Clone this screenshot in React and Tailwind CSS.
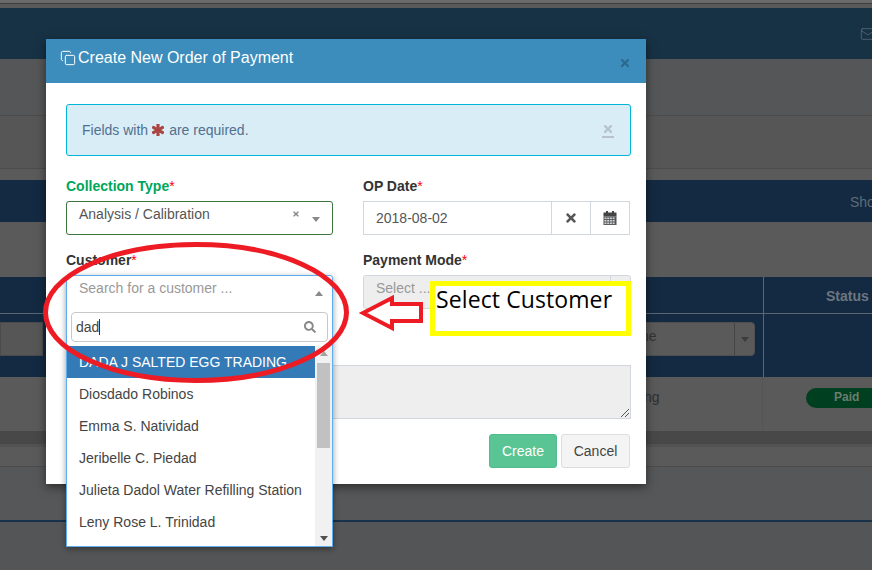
import React from "react";
import { Copy, Mail } from "lucide-react";
import { FaTimes, FaAsterisk, FaSearch } from "react-icons/fa";

const Req = () => <span className="text-[#ff0000] font-normal">*</span>;

const Calendar = () => (
  <svg width="14" height="14" viewBox="0 0 14 14">
    <rect x="0.5" y="1.5" width="13" height="4" fill="#444" />
    <rect x="3" y="0" width="2" height="3" fill="#444" />
    <rect x="9" y="0" width="2" height="3" fill="#444" />
    <rect x="0.5" y="5.5" width="13" height="8.5" fill="#555" />
    {[6.5, 9, 11.5].map((y) =>
      [1.5, 4.2, 6.9, 9.6].map((x) => <rect key={x + "-" + y} x={x} y={y} width="2" height="1.6" fill="#cfd2d6" />)
    )}
  </svg>
);

const Caret = ({ up, color = "#888", size = 4 }) => (
  <span
    className="block w-0 h-0 border-x-transparent border-solid"
    style={{
      borderLeftWidth: size,
      borderRightWidth: size,
      borderTopWidth: up ? 0 : size + 1,
      borderBottomWidth: up ? size + 1 : 0,
      borderTopColor: color,
      borderBottomColor: color,
    }}
  />
);

const customers = [
  "Diosdado Robinos",
  "Emma S. Natividad",
  "Jeribelle C. Piedad",
  "Julieta Dadol Water Refilling Station",
  "Leny Rose L. Trinidad",
];

export default function App() {
  return (
    <div className="relative w-[872px] h-[570px] overflow-hidden bg-[#545556] text-[14px] text-[#444] font-['Liberation_Sans',Arial,sans-serif]">
      {/* dimmed page */}
      <div className="h-[3px] bg-[#6a6a6a]" />
      <div className="h-[1px] bg-[#3e3e3e]" />
      <div className="h-[4px] bg-[#595959]" />
      <div className="h-[51px] bg-[#173245] flex justify-end">
        <Mail className="w-[16px] h-[16px] mt-[18px] -mr-[4px] text-[#5d6a74] shrink-0" strokeWidth={1.2} />
      </div>
      <div className="h-[57px] bg-[#555657] border-b border-[#4c4c4c]" />
      <div className="h-[53px] bg-[#565656] border-b border-[#4c4c4c]" />
      <div className="h-[11px] bg-[#5a5a5a]" />
      <div className="h-[42px] bg-[#132a42] flex items-center justify-end text-[#5f6b77] whitespace-nowrap pt-[2px]">
        <span className="w-[22px] overflow-hidden">Sho</span>
      </div>
      <div className="h-[55px] bg-[#5a5a5a]" />
      <div className="h-[100px] bg-[#132a42] flex">
        <div className="w-[763px] flex flex-col">
          <div className="h-[37px] border-b border-[#5a6672]" />
          <div className="flex justify-between pt-[8px]">
            <div className="w-[43px] h-[34px] bg-[#565656] border border-[#4b4b4b]" />
            <div className="w-[115px] h-[34px] mr-[8px] bg-[#5a5a5a] rounded-r flex items-center justify-end border border-[#4f4f4f]">
              <div className="w-[20px] h-full border-l border-[#444] flex items-center justify-center">
                <Caret color="#3c3c3c" />
              </div>
            </div>
          </div>
        </div>
        <div className="flex-1 border-l border-[#5a6672] flex flex-col">
          <div className="h-[37px] border-b border-[#5a6672] flex items-center pl-[62px] pt-[3px] font-bold text-[#6c7680]">Status</div>
        </div>
      </div>
      <div className="h-[54px] bg-[#5a5a5a] flex pt-0">
        <div className="w-[763px] border-r border-[#555555]" />
        <div className="flex-1 flex justify-end pt-[11px]">
          <div className="w-[66px] h-[20px] rounded-l-full bg-[#003f1f] text-[12px] font-bold text-[#6a7d70] pl-[28px] leading-[18px]">Paid</div>
        </div>
      </div>
      <div className="h-[13px] bg-[#484848]" />
      <div className="h-[3px] bg-[#525252]" />
      <div className="h-[20px] bg-[#5a5a5a] border-b border-[#4c4c4c]" />
      <div className="h-[55px] bg-[#565758] border-b-2 border-[#17324a]" />

      <span className="absolute left-[644px] top-[387px] text-[#2f2f2f]">ng</span>
      <span className="absolute left-[641px] top-[326px] text-[#333]">ne</span>

      {/* modal */}
      <div className="absolute left-[46px] top-[39px] w-[600px] h-[445px] bg-white shadow-[0_3px_9px_rgba(0,0,0,0.5)] flex flex-col">
        <div className="h-[44px] bg-[#3c8dbc] flex items-center pl-[14px] pr-[15px] text-white">
          <Copy className="w-[16px] h-[16px] mr-[2px] -mt-[6px]" strokeWidth={1.5} />
          <span className="text-[16px] -mt-[6px]">Create New Order of Payment</span>
          <span className="ml-auto text-[#2c6a90] mt-[4px]"><FaTimes className="w-[12px] h-[12px]" /></span>
        </div>
        <div className="pl-[20px] pr-[15px] pt-[21px] flex-1 flex flex-col">
          <div className="w-[565px] h-[52px] shrink-0 bg-[#d9edf7] border border-[#00b5d8] rounded-[3px] pl-[15px] pr-[16px] flex items-center text-[14px] text-[#51708f]">
            <span>Fields with</span>
            <FaAsterisk className="w-[12px] h-[12px] ml-[4px] mr-[5px] text-[#a94442]" stroke="currentColor" strokeWidth="50" />
            <span>are required.</span>
            <span className="ml-auto border-b-2 border-[#b8c2c9] text-[#b8c2c9] pb-[1px]"><FaTimes className="w-[12px] h-[12px]" /></span>
          </div>

          <div className="flex mt-[21px] h-[58px]">
            <div className="w-[267px] shrink-0">
              <div className="h-[19px] font-bold text-[#00a65a] leading-[19px]">Collection Type<Req /></div>
              <div className="mt-[5px] h-[34px] border border-[#3c763d] rounded-[3px] flex items-start pl-[12px] pr-[12px] pt-[3px] leading-[18px]">
                <span className="text-[#555]">Analysis / Calibration</span>
                <span className="ml-auto mt-[3px] text-[#888]"><FaTimes className="w-[8px] h-[8px] mt-[2px]" /></span>
                <span className="ml-[12px] mt-[12px]"><Caret /></span>
              </div>
            </div>
            <div className="w-[267px] shrink-0 ml-[30px]">
              <div className="h-[19px] font-bold text-[#333] leading-[19px]">OP Date<Req /></div>
              <div className="mt-[5px] h-[34px] flex">
                <div className="w-[189px] border border-[#d2d6de] pl-[12px] flex items-center text-[#555]">2018-08-02</div>
                <div className="w-[39px] border-y border-r border-[#d2d6de] flex items-center justify-center text-[#555]"><FaTimes className="w-[14px] h-[14px]" /></div>
                <div className="w-[39px] border-y border-r border-[#d2d6de] flex items-center justify-center"><Calendar /></div>
              </div>
            </div>
          </div>

          <div className="flex mt-[16px]">
            <div className="w-[267px] shrink-0">
              <div className="h-[19px] font-bold text-[#333] leading-[19px]">Customer<Req /></div>
            </div>
            <div className="w-[268px] shrink-0 ml-[30px]">
              <div className="h-[19px] font-bold text-[#333] leading-[19px]">Payment Mode<Req /></div>
              <div className="mt-[5px] h-[34px] bg-[#eeeeee] border border-[#d2d6de] rounded-[3px] flex pl-[12px] pt-[2px] text-[#999]">
                <span>Select ...</span>
                <span className="ml-auto w-[20px] border-l border-[#d2d6de] -mt-[2px]" />
              </div>
            </div>
          </div>

          <div className="mt-[56px] ml-[60px] w-[505px] h-[54px] shrink-0 bg-[#eeeeee] border border-[#d2d6de] relative overflow-hidden">
            <svg className="absolute right-0 bottom-0" width="10" height="10" viewBox="0 0 10 10">
              <path d="M1 9 9 1M5 9 9 5" stroke="#555" strokeWidth="1" fill="none" />
            </svg>
          </div>

          <div className="mt-[15px] flex justify-end gap-[4px] pr-[1px] w-[565px]">
            <button className="w-[68px] h-[34px] rounded-[3px] bg-[#5ac594] text-white border border-[#50bd8b]">Create</button>
            <button className="w-[69px] h-[34px] rounded-[3px] bg-[#f4f4f4] text-[#444] border border-[#dddddd]">Cancel</button>
          </div>
        </div>
      </div>

      {/* open customer dropdown */}
      <div className="absolute left-[66px] top-[275px] w-[267px] h-[272px] bg-white border border-[#5dadf0] rounded-t-[3px] shadow-[0_2px_6px_rgba(0,0,0,0.4)] flex flex-col">
        <div className="h-[36px] flex pl-[12px] pr-[9px] pt-[3px] text-[#999] leading-[18px]">
          <span>Search for a customer ...</span>
          <span className="ml-auto mt-[12px]"><Caret up /></span>
        </div>
        <div className="h-[30px] mx-[4px] border border-[#c8c8c8] rounded-[4px] flex items-center pl-[4px] pr-[11px] text-[#444]">
          <span>dad</span>
          <span className="w-px h-[16px] bg-[#333]" />
          <FaSearch className="ml-auto w-[12px] h-[12px] text-[#888]" />
        </div>
        <div className="mt-[4px] flex-1 flex min-h-0">
          <div className="w-[248px]">
            <div className="h-[32px] bg-[#337ab7] text-white pl-[12px] flex items-center">DADA J SALTED EGG TRADING</div>
            {customers.map((c) => (
              <div key={c} className="h-[32px] pl-[12px] flex items-center text-[#444] whitespace-nowrap">{c}</div>
            ))}
          </div>
          <div className="flex-1 bg-[#f1f1f1] flex flex-col items-center pt-[5px] relative">
            <Caret up color="#a3a3a3" />
            <div className="mt-[7px] w-[13px] h-[85px] bg-[#c1c1c1]" />
            <span className="absolute bottom-[5px]"><Caret color="#505050" /></span>
          </div>
        </div>
      </div>

      {/* annotation */}
      <div className="absolute left-[430px] top-[281px] w-[201px] h-[55px] bg-white border-[5px] border-[#ffff00] text-black text-[23px] leading-[26px] pl-[1px] whitespace-nowrap font-['Open_Sans',sans-serif] tracking-[0.1px]">Select Customer</div>
      <svg className="absolute left-0 top-0 pointer-events-none" width="872" height="570" viewBox="0 0 872 570">
        <ellipse cx="196" cy="312.5" rx="150.5" ry="68" fill="none" stroke="#ed1c24" strokeWidth="5" />
        <path d="M363 313 392 298V304H421V321H392V328Z" fill="#fff" stroke="#ed1c24" strokeWidth="4" />
      </svg>
    </div>
  );
}
